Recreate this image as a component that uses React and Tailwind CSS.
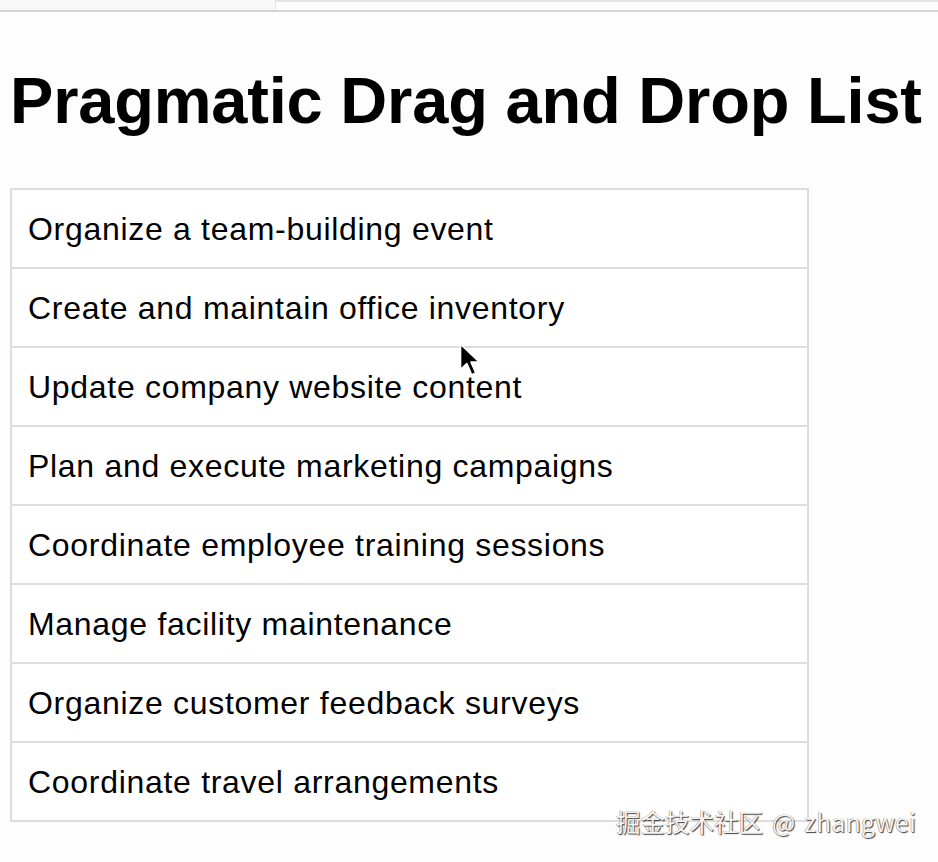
import React from 'react';

const tasks = [
  'Organize a team-building event',
  'Create and maintain office inventory',
  'Update company website content',
  'Plan and execute marketing campaigns',
  'Coordinate employee training sessions',
  'Manage facility maintenance',
  'Organize customer feedback surveys',
  'Coordinate travel arrangements',
];

function Cursor() {
  return (
    <svg className="absolute left-[458px] top-[342px] pointer-events-none" width="24" height="36" viewBox="0 0 22 34">
      <path d="M2 2 L2 26 L8 20.5 L12.5 31 L16.5 29.2 L12 19 L20 19 Z" fill="#000" stroke="#fff" strokeWidth="1.6" strokeLinejoin="round" />
    </svg>
  );
}

export default function App() {
  return (
    <div className="relative min-h-[862px] bg-[#fdfdfd] text-black font-['Liberation_Sans',Arial,sans-serif] overflow-hidden">
      {/* browser chrome strip */}
      <div className="flex h-[12px] border-b-2 border-[#d4d4d4]">
        <div className="w-[275px] bg-[#f8f8f8]" />
        <div className="flex-1 border-t-2 border-l border-[#e6e6e6] bg-[#fefefe]" />
      </div>

      <h1 className="mt-[51px] ml-[10px] text-[65px] leading-[75px] font-bold tracking-[-0.2px]">
        Pragmatic Drag and Drop List
      </h1>

      <ul className="mt-[50px] ml-[10px] w-[799px] border-2 border-[#dddddd]">
        {tasks.map((t, i) => (
          <li
            key={t}
            className={
              i === 0
                ? 'h-[77px] flex items-center pl-[16px] text-[32px] tracking-[0.7px] bg-white'
                : 'h-[79px] border-t-2 border-[#dddddd] flex items-center pl-[16px] text-[32px] tracking-[0.7px] bg-white'
            }
          >
            {t}
          </li>
        ))}
      </ul>

      <Cursor />

      <div className="absolute left-[616px] top-[806px] flex text-[24.5px] leading-[32px] text-[#f4f4f4] font-['Noto_Sans_CJK_SC',sans-serif] [text-shadow:1px_1px_1px_rgba(0,0,0,0.75),-0.5px_-0.5px_0.5px_rgba(0,0,0,0.45)]">
        <span>掘金技术社区</span>
        <span className="ml-[9px]">@</span>
        <span className="ml-[9px] tracking-[0.4px]">zhangwei</span>
      </div>
    </div>
  );
}
